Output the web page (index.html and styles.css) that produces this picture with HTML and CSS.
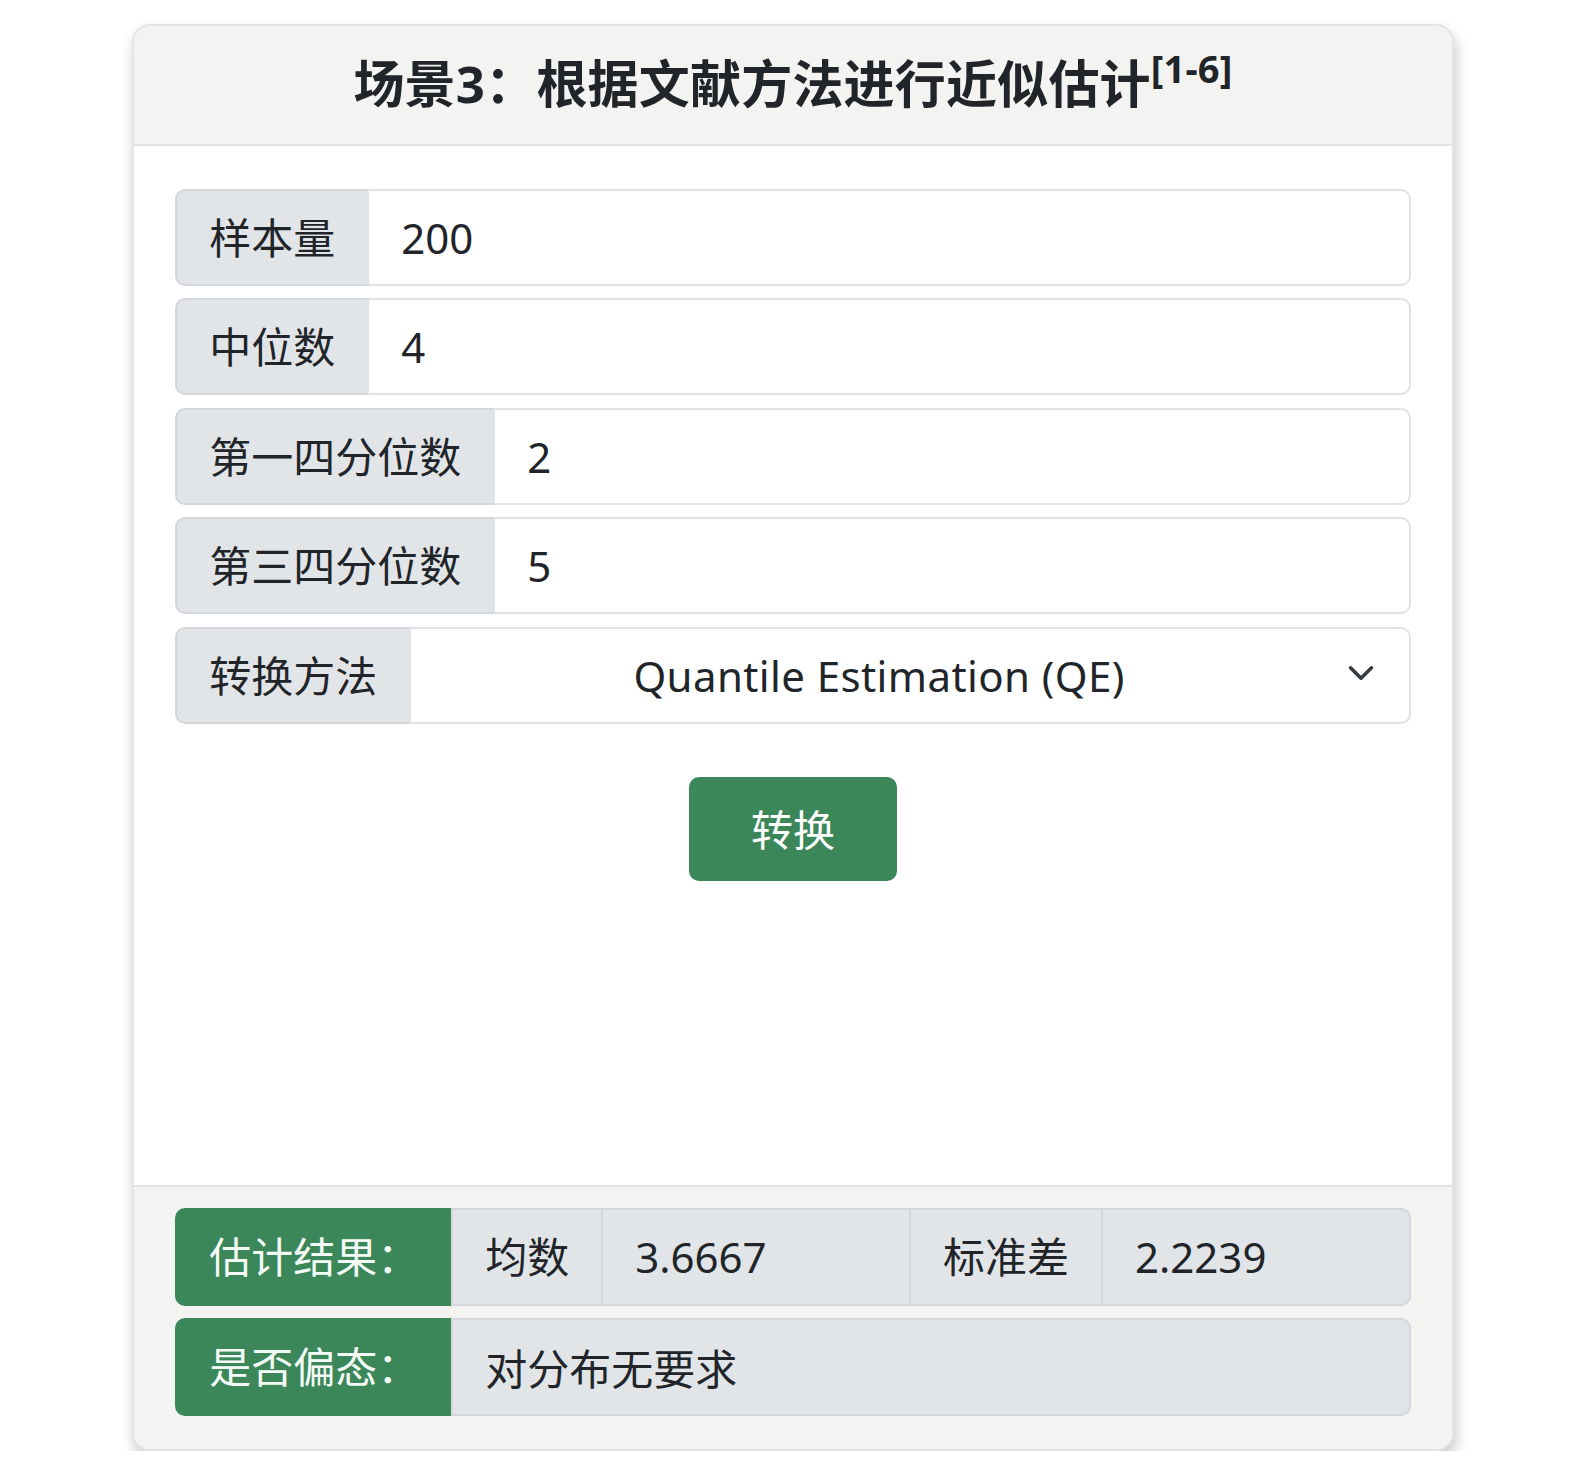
FILE: index.html
```html
<!DOCTYPE html>
<html lang="zh-CN">
<head>
<meta charset="utf-8">
<title>场景3</title>
<link rel="stylesheet" href="styles.css">
</head>
<body>
<div class="page">
  <div class="card">
    <div class="card-header">
      <h5 class="title">场景3：根据文献方法进行近似估计<sup>[1-6]</sup></h5>
    </div>
    <div class="card-body">
      <div class="input-group">
        <span class="ig-text">样本量</span>
        <input class="form-control" type="text" value="200">
      </div>
      <div class="input-group">
        <span class="ig-text">中位数</span>
        <input class="form-control" type="text" value="4">
      </div>
      <div class="input-group">
        <span class="ig-text">第一四分位数</span>
        <input class="form-control" type="text" value="2">
      </div>
      <div class="input-group">
        <span class="ig-text">第三四分位数</span>
        <input class="form-control" type="text" value="5">
      </div>
      <div class="input-group">
        <span class="ig-text">转换方法</span>
        <div class="form-select">
          <span class="select-value">Quantile Estimation (QE)</span>
          <svg class="chev" width="28" height="28" viewBox="0 0 16 16"><path d="M2 5l6 6 6-6" fill="none" stroke="#343a40" stroke-width="2" stroke-linecap="round" stroke-linejoin="round"/></svg>
        </div>
      </div>
      <div class="btn-row">
        <button class="btn-green" type="button">转换</button>
      </div>
    </div>
    <div class="card-footer">
      <div class="input-group result">
        <span class="ig-text green">估计结果：</span>
        <span class="ig-text">均数</span>
        <span class="ig-value">3.6667</span>
        <span class="ig-text">标准差</span>
        <span class="ig-value">2.2239</span>
      </div>
      <div class="input-group result">
        <span class="ig-text green">是否偏态：</span>
        <span class="ig-value">对分布无要求</span>
      </div>
    </div>
  </div>
</div>
</body>
</html>
```
FILE: styles.css
```css
* { box-sizing: border-box; }
body {
  margin: 0;
  background: #ffffff;
  font-family: "Noto Sans", "Noto Sans CJK SC", sans-serif;
  color: #212529;
}
.page {
  padding: 24px 121px 0 132px;
}
.card {
  border: 2px solid #e4e4e3;
  border-radius: 18px;
  overflow: hidden;
  background: #fff;
  box-shadow: 2px 8px 14px rgba(0, 0, 0, 0.22);
}
.card-header {
  background: #f3f3f2;
  border-bottom: 2px solid #e2e2e1;
  height: 119.5px;
  padding-top: 27px;
  text-align: center;
}
.title {
  margin: 0;
  font-size: 51px;
  font-weight: 700;
  line-height: 60px;
  color: #212529;
  letter-spacing: 0.2px;
}
.title sup {
  font-size: 38px;
  line-height: 0;
  vertical-align: 0;
  position: relative;
  top: -20px;
  margin-left: 0;
}
.card-body {
  height: 1039.7px;
  padding: 43.2px 41.2px 0;
}
.input-group {
  display: flex;
  height: 97px;
  margin-bottom: 12.5px;
  font-size: 42px;
}
.ig-text {
  display: flex;
  align-items: center;
  padding: 0 32px;
  background: #e2e5e8;
  border: 2px solid #d3d7dc;
  color: #212529;
  white-space: nowrap;
  line-height: 1.5;
}
.input-group > :first-child {
  border-radius: 10px 0 0 10px;
}
.input-group > :last-child {
  border-radius: 0 10px 10px 0;
}
.input-group > * + * {
  margin-left: -2px;
}
.form-control {
  flex: 1;
  min-width: 0;
  border: 2px solid #dfe2e6;
  background: #fff;
  font: inherit;
  color: #212529;
  padding: 0 32px;
  outline: none;
}
.form-select {
  flex: 1;
  display: flex;
  align-items: center;
  border: 2px solid #dfe2e6;
  background: #fff;
  padding: 0 34px 0 32px;
}
.select-value {
  flex: 1;
  text-align: center;
  padding-right: 32px;
  letter-spacing: 0.4px;
  color: #212529;
}
.chev {
  flex: none;
  margin-top: -4px;
}
.btn-row {
  display: flex;
  justify-content: center;
  padding-top: 41.2px;
}
.btn-green {
  font: inherit;
  font-size: 42px;
  line-height: 1.5;
  color: #fff;
  background: #3b875a;
  border: 2px solid #3b875a;
  border-radius: 10px;
  padding: 18px 60px;
  height: 103.5px;
  cursor: pointer;
}
.card-footer {
  background: #f3f3f2;
  border-top: 2px solid #e2e2e1;
  padding: 21px 41.2px 20.7px;
}
.input-group.result {
  height: 97.5px;
}
.ig-text.green {
  background: #3b875a;
  border-color: #3b875a;
  color: #f4fbf6;
}
.ig-value {
  flex: 1;
  display: flex;
  align-items: center;
  padding: 0 32px;
  background: #e2e5e8;
  border: 2px solid #d3d7dc;
  color: #212529;
  white-space: nowrap;
}
```
